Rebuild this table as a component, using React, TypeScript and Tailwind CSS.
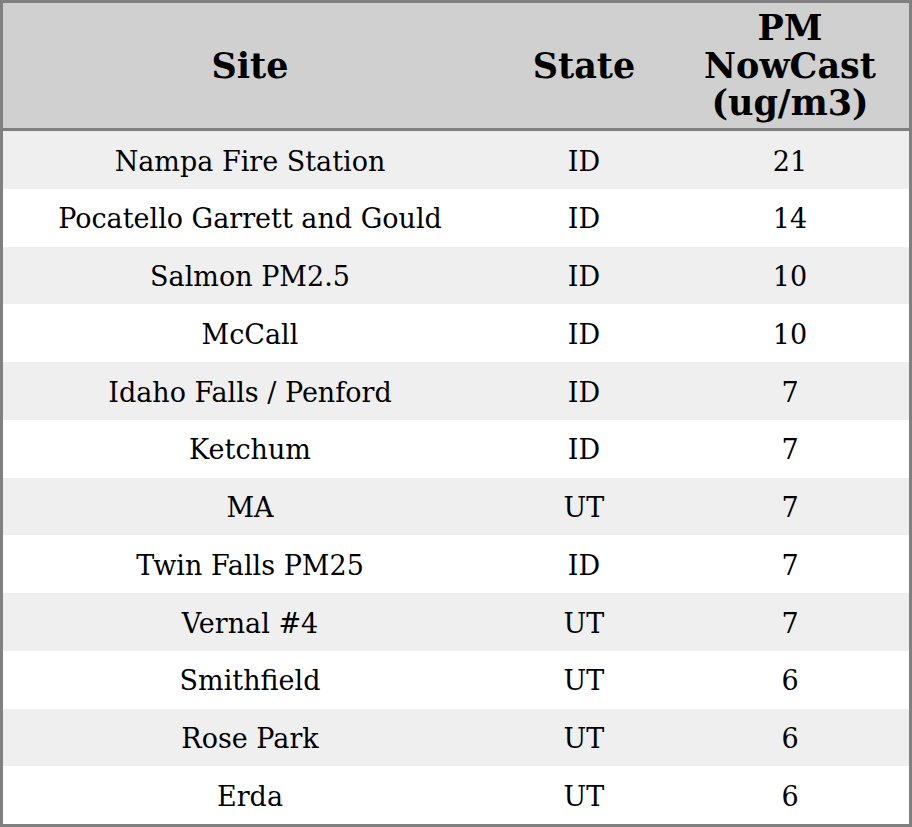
const rows: [string, string, string][] = [
  ["Nampa Fire Station", "ID", "21"],
  ["Pocatello Garrett and Gould", "ID", "14"],
  ["Salmon PM2.5", "ID", "10"],
  ["McCall", "ID", "10"],
  ["Idaho Falls / Penford", "ID", "7"],
  ["Ketchum", "ID", "7"],
  ["MA", "UT", "7"],
  ["Twin Falls PM25", "ID", "7"],
  ["Vernal #4", "UT", "7"],
  ["Smithfield", "UT", "6"],
  ["Rose Park", "UT", "6"],
  ["Erda", "UT", "6"],
];

export default function App() {
  return (
    <div className="w-[912px] h-[827px] border-[3px] border-[#808080] flex flex-col bg-white text-black font-['DejaVu_Serif',serif]">
      <div className="flex h-[125px] shrink-0 bg-[#d0d0d0] border-b-[3px] border-[#808080] box-content font-bold text-[35px] leading-[37.5px]">
        <div className="w-[494px] flex items-center justify-center text-center">Site</div>
        <div className="w-[174px] flex items-center justify-center text-center">State</div>
        <div className="flex-1 flex items-center justify-center text-center">
          PM
          <br />
          NowCast
          <br />
          (ug/m3)
        </div>
      </div>
      {rows.map(([site, state, pm], i) => (
        <div
          key={site}
          className={`flex h-[57.75px] pt-1 text-[27px] ${i % 2 === 0 ? "bg-[#efefef]" : "bg-white"}`}
        >
          <div className="w-[494px] flex items-center justify-center">{site}</div>
          <div className="w-[174px] flex items-center justify-center">{state}</div>
          <div className="flex-1 flex items-center justify-center">{pm}</div>
        </div>
      ))}
    </div>
  );
}
